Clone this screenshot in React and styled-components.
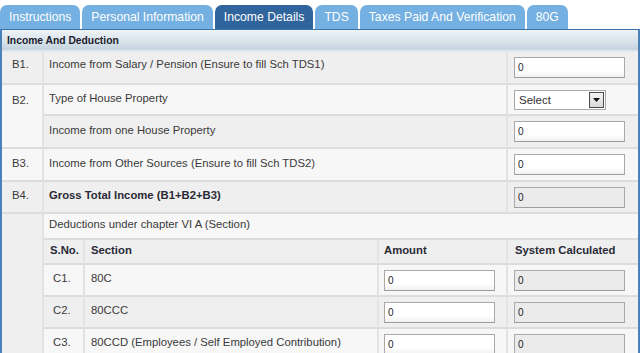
import React from "react";
import styled, { createGlobalStyle } from "styled-components";

const GlobalStyle = createGlobalStyle`
  html, body { margin: 0; padding: 0; background: #ffffff; }
  body {
    font-family: "Liberation Sans", Arial, sans-serif;
    width: 640px;
    height: 353px;
    overflow: hidden;
  }
`;

const Page = styled.div`
  width: 640px;
`;

const TabBar = styled.div`
  display: flex;
  gap: 2px;
  padding-top: 5px;
`;

const Tab = styled.div`
  height: 24px;
  padding: 0 9px;
  display: flex;
  align-items: center;
  font-size: 12.2px;
  color: #ffffff;
  background: ${(p) => (p.$active ? "#2f659c" : "#74b0e1")};
  border-radius: 7px 7px 0 0;
  white-space: nowrap;
`;

const Panel = styled.div`
  box-sizing: border-box;
  width: 640px;
  border-top: 1px solid #3b74aa;
  border-left: 2px solid #4a82b8;
  border-right: 2px solid #4a82b8;
`;

const PanelHeader = styled.div`
  height: 20px;
  display: flex;
  align-items: center;
  padding-left: 5px;
  font-size: 10.3px;
  font-weight: bold;
  color: #1c1c2c;
  background: linear-gradient(#eef3f6 0%, #dbe5ec 50%, #c3d4e0 100%);
  border-bottom: 2px solid #e1e8ed;
`;

const Table = styled.table`
  width: 636px;
  table-layout: fixed;
  border-collapse: separate;
  border-spacing: 0;
  font-size: 11.3px;
  color: #3a3a3a;
`;

const Row = styled.tr`
  height: ${(p) => p.$h}px;
  background: ${(p) => (p.$alt ? "#f7f7f7" : "#efefef")};
`;

const Cell = styled.td`
  box-sizing: border-box;
  padding: ${(p) => p.$pt ?? 0}px 0 ${(p) => (p.$field ? 0 : 4)}px ${(p) => p.$pl ?? 5}px;
  vertical-align: ${(p) => (p.$pt != null ? "top" : "middle")};
  border-bottom: 2px solid #dcdcdc;
  border-right: ${(p) => (p.$last ? "none" : "2px solid #e3e3e3")};
  font-weight: ${(p) => (p.$bold ? "bold" : "normal")};
  color: ${(p) => (p.$bold ? "#2a2a36" : "#3a3a3a")};
  background: ${(p) => p.$bg || "transparent"};
  white-space: nowrap;
`;

const Field = styled.input`
  display: block;
  box-sizing: border-box;
  width: 111px;
  height: 21px;
  margin: 0;
  padding: 0 3px;
  border: 1px solid #a9a9a9;
  border-bottom-color: #9c9c9c;
  background: ${(p) =>
    p.disabled ? "#ebebeb" : "linear-gradient(#ffffff 65%, #f1f1f1 100%)"};
  font-family: "Liberation Sans", Arial, sans-serif;
  font-size: 10px;
  color: #222;
  outline: none;
`;

const SelectBox = styled.div`
  box-sizing: border-box;
  width: 92px;
  height: 20px;
  display: flex;
  align-items: center;
  border: 1px solid #a9a9a9;
  background: #ffffff;
  padding: 1px;
`;

const SelectText = styled.span`
  flex: 1;
  padding-left: 3px;
  font-size: 11.5px;
  color: #333;
`;

const ArrowBox = styled.span`
  box-sizing: border-box;
  width: 15px;
  height: 16px;
  display: flex;
  align-items: center;
  justify-content: center;
  border: 1px solid #4a4a4a;
  background: linear-gradient(#f4f4f4, #d8d8d8);
`;

const tabs = [
  "Instructions",
  "Personal Information",
  "Income Details",
  "TDS",
  "Taxes Paid And Verification",
  "80G",
];

const deductions = [
  ["C1.", "80C"],
  ["C2.", "80CCC"],
  ["C3.", "80CCD (Employees / Self Employed Contribution)"],
];

export default function App() {
  return (
    <Page>
      <GlobalStyle />
      <TabBar>
        {tabs.map((t) => (
          <Tab key={t} $active={t === "Income Details"}>
            {t}
          </Tab>
        ))}
      </TabBar>
      <Panel>
        <PanelHeader>Income And Deduction</PanelHeader>
        <Table>
          <colgroup>
            <col style={{ width: 42 }} />
            <col style={{ width: 41 }} />
            <col style={{ width: 294 }} />
            <col style={{ width: 129 }} />
            <col style={{ width: 130 }} />
          </colgroup>
          <tbody>
            <Row $h={33}>
              <Cell $pl={10} $pt={6}>B1.</Cell>
              <Cell colSpan={3} $pt={6}>Income from Salary / Pension (Ensure to fill Sch TDS1)</Cell>
              <Cell $pl={6} $field $last>
                <Field defaultValue="0" />
              </Cell>
            </Row>
            <Row $h={31} $alt>
              <Cell $pl={10} $pt={9} rowSpan={2}>B2.</Cell>
              <Cell colSpan={3}>Type of House Property</Cell>
              <Cell $pl={6} $field $last>
                <SelectBox>
                  <SelectText>Select</SelectText>
                  <ArrowBox>
                    <svg width="7" height="4" viewBox="0 0 7 4">
                      <path d="M0 0 L7 0 L3.5 4 Z" fill="#111" />
                    </svg>
                  </ArrowBox>
                </SelectBox>
              </Cell>
            </Row>
            <Row $h={33}>
              <Cell colSpan={3}>Income from one House Property</Cell>
              <Cell $pl={6} $field $last>
                <Field defaultValue="0" />
              </Cell>
            </Row>
            <Row $h={33} $alt>
              <Cell $pl={10}>B3.</Cell>
              <Cell colSpan={3}>Income from Other Sources (Ensure to fill Sch TDS2)</Cell>
              <Cell $pl={6} $field $last>
                <Field defaultValue="0" />
              </Cell>
            </Row>
            <Row $h={32}>
              <Cell $pl={10}>B4.</Cell>
              <Cell colSpan={3} $bold>Gross Total Income (B1+B2+B3)</Cell>
              <Cell $pl={6} $field $last>
                <Field defaultValue="0" disabled />
              </Cell>
            </Row>
            <Row $h={26} $alt>
              <Cell rowSpan={5} $bg="#efefef" />
              <Cell colSpan={4} $last>Deductions under chapter VI A (Section)</Cell>
            </Row>
            <Row $h={25}>
              <Cell $pl={6} $bold>S.No.</Cell>
              <Cell $pl={6} $bold>Section</Cell>
              <Cell $pl={5} $bold>Amount</Cell>
              <Cell $pl={7} $bold $last>System Calculated</Cell>
            </Row>
            {deductions.map(([no, sec], i) => (
              <Row key={no} $h={32} $alt={i % 2 === 0}>
                <Cell $pl={9}>{no}</Cell>
                <Cell $pl={6}>{sec}</Cell>
                <Cell $pl={5} $field>
                  <Field defaultValue="0" />
                </Cell>
                <Cell $pl={6} $field $last>
                  <Field defaultValue="0" disabled />
                </Cell>
              </Row>
            ))}
          </tbody>
        </Table>
      </Panel>
    </Page>
  );
}
